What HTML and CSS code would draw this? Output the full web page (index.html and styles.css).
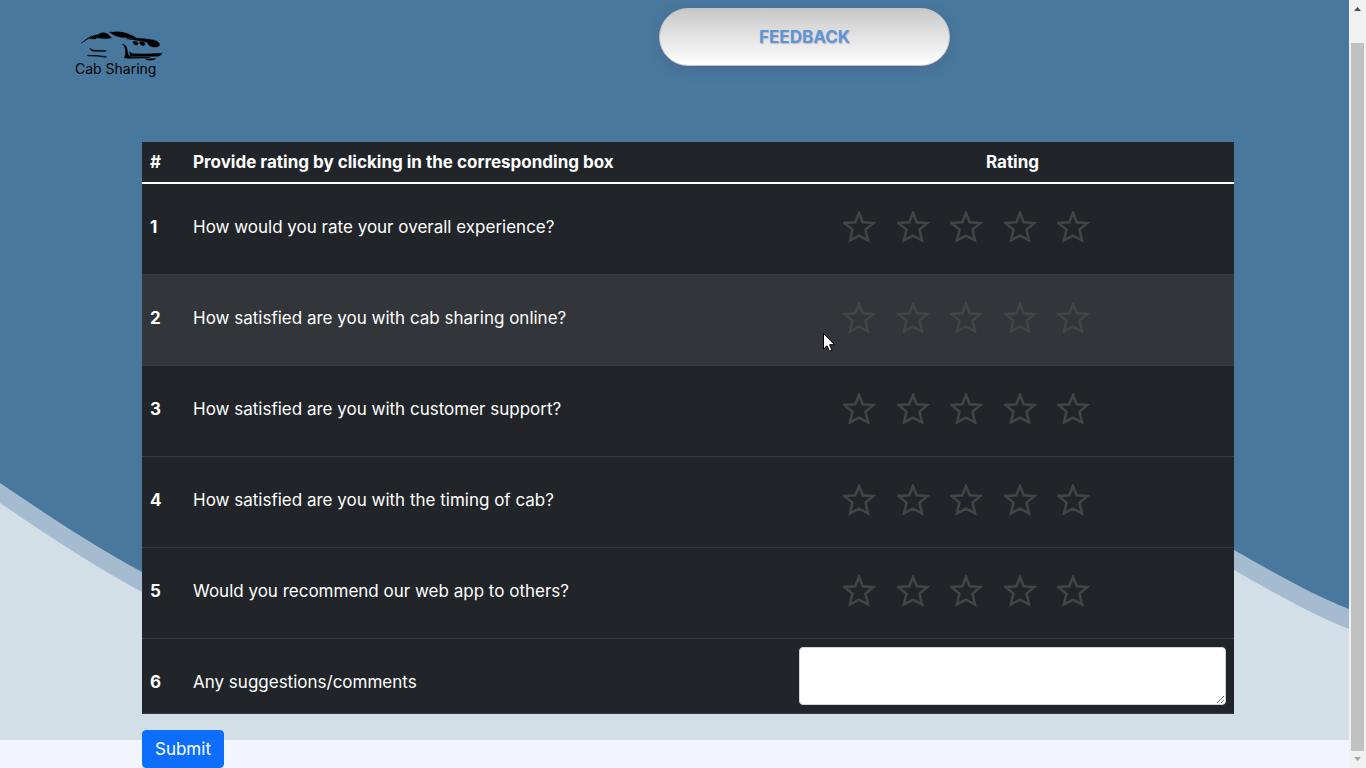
FILE: index.html
```html
<!DOCTYPE html>
<html lang="en">
<head>
<meta charset="utf-8">
<title>Cab Sharing - Feedback</title>
<link rel="stylesheet" href="styles.css">
</head>
<body>
<svg class="symbols" aria-hidden="true">
  <symbol id="star" viewBox="0 0 33 32">
    <path d="M16 2L19.700 11.300L30.500 12L22.500 18.600L25 29.300L16 24.600L7 29.300L9.500 18.600L1.500 12L12.300 11.300Z" fill="none" stroke="#444" stroke-width="2.500"/>
  </symbol>
</svg>
<div class="shell">
  <div class="page">
    <svg class="waves" viewBox="0 0 1349 740" preserveAspectRatio="none" aria-hidden="true">
      <path fill="#d2dfe6" d="M0 0H1349V740H0Z"/>
      <path fill="#a5bcd0" d="M0 0H1349V629C1310 614 1275 593 1234 570C950 410 760 360 610 500C450 650 300 675 142 592C92 565 46 534 0 503Z"/>
      <path fill="#48789d" d="M0 0H1349V609C1310 594 1275 573 1234 550C950 390 760 340 610 480C450 630 300 655 142 572C92 545 46 514 0 483Z"/>
    </svg>
    <header class="header">
      <a class="logo" href="#">
        <svg class="logo-car" viewBox="45 35 264 90" aria-hidden="true">
          <path stroke="#000" stroke-width="1.500" d="M64 72Q78 58 96 49L88 56Q74 64 64 72ZM89 58Q97 47 112 46L108 58ZM110 55Q114 40 132 40Q144 41 154 56Q132 59 110 55ZM149 39Q176 35 199 42Q218 48 229 57L184 54Q163 51 149 39ZM200 58Q240 54 280 62Q296 65 299 76Q297 84 280 83Q266 81 261 69L231 63ZM219 67Q231 64 235 71Q234 78 227 77Q219 74 219 67ZM239 68Q251 66 255 73Q254 80 248 79Q239 76 239 68ZM188 74Q201 77 203 99Q203 107 210 111L209 116H193Q199 104 196 89Q195 80 188 74ZM209 98L218 103Q260 105 306 102Q303 110 292 111H211ZM198 113L270 114L252 116L203 117ZM256 118H287Q277 124 263 122ZM90 86Q94 93 108 93L139 94L138 96L99 96Q91 93 90 86ZM83 108Q108 107 140 112L138 114Q110 109 83 110Z"/>
        </svg>
        <span class="logo-text">Cab Sharing</span>
      </a>
      <h1 class="title">FEEDBACK</h1>
    </header>
    <form class="feedback">
      <table class="table">
        <colgroup><col class="col-number"><col><col class="col-rating"></colgroup>
        <thead>
          <tr><th scope="col">#</th><th scope="col">Provide rating by clicking in the corresponding box</th><th scope="col" class="rating-head">Rating</th></tr>
        </thead>
        <tbody>
          <tr><th scope="row">1</th><td>How would you rate your overall experience?</td><td class="rating-cell"></td></tr>
          <tr class="active"><th scope="row">2</th><td>How satisfied are you with cab sharing online?</td><td class="rating-cell"></td></tr>
          <tr><th scope="row">3</th><td>How satisfied are you with customer support?</td><td class="rating-cell"></td></tr>
          <tr><th scope="row">4</th><td>How satisfied are you with the timing of cab?</td><td class="rating-cell"></td></tr>
          <tr><th scope="row">5</th><td>Would you recommend our web app to others?</td><td class="rating-cell"></td></tr>
          <tr><th scope="row">6</th><td><label for="comments">Any suggestions/comments</label></td><td class="comment-cell"><textarea class="comments" id="comments" name="comments"></textarea></td></tr>
        </tbody>
      </table>
      <button class="submit" type="submit">Submit</button>
    </form>
    <svg class="cursor" viewBox="0 0 12 19" aria-hidden="true"><path d="M.5 .5V16L4 12.700L6.500 18.300L9 17.200L6.600 11.700H11.500Z" fill="#fff" stroke="#000"/></svg>
  </div>
  <div class="scrollbar" aria-hidden="true">
    <svg class="arrow" viewBox="0 0 17 17"><path d="M5 11L8.500 7L12 11Z" fill="#505050"/></svg>
    <div class="thumb"></div>
    <svg class="arrow" viewBox="0 0 17 17"><path d="M5 6L8.500 10L12 6Z" fill="#a3a3a3"/></svg>
  </div>
</div>
<script src="script.js"></script>
</body>
</html>
```
FILE: styles.css
```css
* { box-sizing: border-box; }
body {
  margin: 0;
  background: #f2f5fe;
  font: 17px/24px Inter, "Open Sans", sans-serif;
}
.symbols { display: none; }
.shell { display: flex; min-height: 100vh; }
.page { position: relative; flex: 1; min-width: 0; }
.waves { position: absolute; inset: 0 0 28px; width: 100%; height: calc(100% - 28px); }
.header {
  position: relative;
  display: flex;
  align-items: flex-start;
  padding: 8px 75px;
  min-height: 142px;
}
.logo { width: 88px; margin-top: 23px; color: #000; text-decoration: none; }
.logo-car { display: block; width: 88px; height: 30px; }
.logo-text { display: block; font-size: 14px; line-height: 16px; white-space: nowrap; }
.title {
  margin: 0 0 0 496px;
  width: 291px;
  border: 1px solid #c4c4c4;
  border-radius: 32px;
  background: linear-gradient(#c8c8c8, #fff);
  box-shadow: 0 4px 12px rgba(80, 80, 130, .35);
  color: #5a96d8;
  font-size: 17px;
  line-height: 56px;
  text-align: center;
  text-shadow: 1px 1px 1px #c9b8c0;
}
.feedback { position: relative; margin: 0 115px 0 142px; }
.table {
  width: 100%;
  margin-bottom: 16px;
  border-collapse: separate;
  border-spacing: 0;
  table-layout: fixed;
  background: #212529;
  color: #fff;
}
.col-number { width: 43px; }
.col-rating { width: 443px; }
.table th, .table td {
  padding: 31px 8px 8px;
  border-bottom: 1px solid #373b3e;
  text-align: left;
  vertical-align: top;
}
.table thead th { padding: 8px; border-bottom: 2px solid #fff; }
.table thead .rating-head { text-align: center; }
.table .rating-cell { padding: 27px 8px 31px 52px; }
.table .comment-cell { padding: 8px; }
.active { background: #323539; }
.stars { display: flex; justify-content: space-between; width: 247px; height: 32px; }
.star { position: relative; width: 33px; height: 32px; cursor: pointer; }
.star input { position: absolute; inset: 0; margin: 0; width: 100%; height: 100%; opacity: 0; }
.star svg { display: block; width: 33px; height: 32px; }
.comments {
  display: block;
  width: 100%;
  height: 58px;
  padding: 6px 12px;
  border: 1px solid #ced4da;
  border-radius: 4px;
  font: inherit;
  resize: vertical;
}
.submit {
  display: block;
  padding: 6px 12px;
  border: 1px solid #0d6efd;
  border-radius: 4px;
  background: #0d6efd;
  color: #fff;
  font: inherit;
}
.cursor { position: absolute; left: 823px; top: 333px; width: 12px; height: 19px; }
.scrollbar {
  display: flex;
  flex-direction: column;
  width: 17px;
  background: #f1f1f1;
}
.arrow { width: 17px; height: 17px; flex: none; }
.thumb { flex: 1; margin: 26px 2px 0; background: #c1c1c1; }
```
FILE: script.js
```javascript
document.querySelectorAll('.rating-cell').forEach(function (cell, row) {
  var group = document.createElement('div');
  group.className = 'stars';
  group.setAttribute('role', 'radiogroup');
  group.setAttribute('aria-label', cell.previousElementSibling.textContent);
  for (var i = 1; i <= 5; i++) {
    group.insertAdjacentHTML('beforeend',
      '<label class="star"><input type="radio" name="rating' + (row + 1) + '" value="' + i +
      '" aria-label="' + i + ' of 5"><svg aria-hidden="true"><use href="#star"/></svg></label>');
  }
  cell.appendChild(group);
});
```
